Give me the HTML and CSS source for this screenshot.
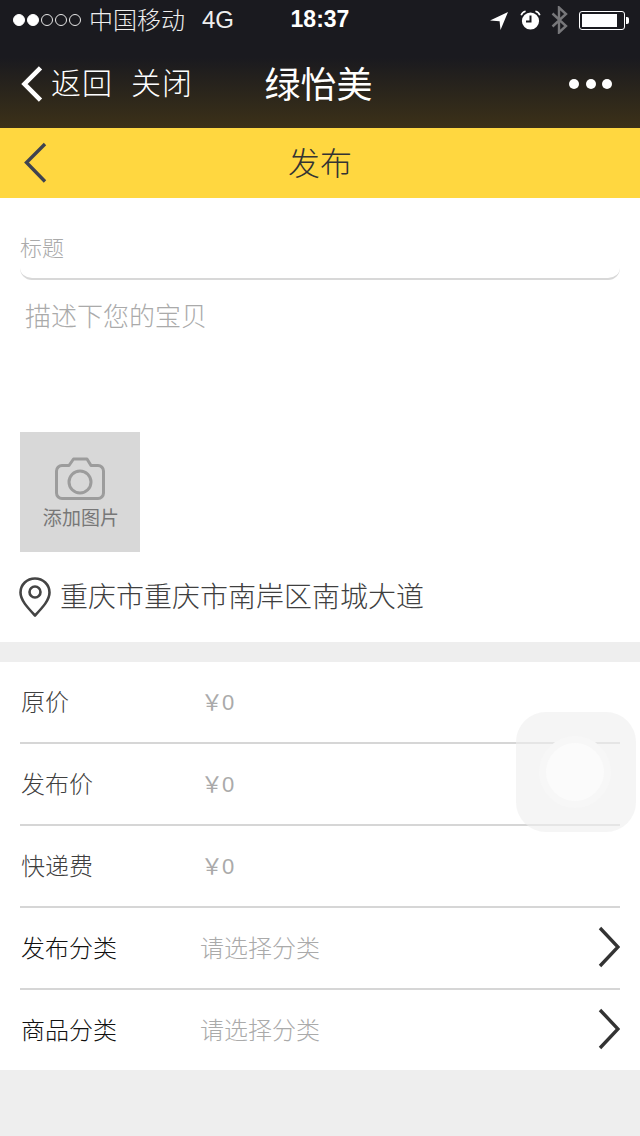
FILE: index.html
```html
<!DOCTYPE html>
<html lang="zh-CN">
<head>
<meta charset="utf-8">
<title>发布</title>
<link rel="stylesheet" href="styles.css">
</head>
<body>
<div class="app">
  <header class="wx">
    <div class="status">
      <div class="status-left">
        <span class="dots"><i class="dot on"></i><i class="dot on"></i><i class="dot"></i><i class="dot"></i><i class="dot"></i></span>
        <span class="carrier">中国移动</span>
        <span class="net">4G</span>
      </div>
      <div class="time">18:37</div>
      <div class="status-right">
        <svg class="ic-loc" width="18" height="20" viewBox="0 0 18 20"><path d="M0 10.5 18 2 10.5 20 9.6 11.2Z" fill="#fff"/></svg>
        <svg class="ic-alarm" width="21" height="20" viewBox="0 0 21 20"><circle cx="10.5" cy="11" r="8.6" fill="#fff"/><path d="M10.5 5.5V11.6H6" fill="none" stroke="#1a1a1f" stroke-width="2"/><path d="M1.2 5.2C2 2.8 3.6 1.6 5.6 1.2M19.8 5.2C19 2.8 17.4 1.6 15.4 1.2" fill="none" stroke="#fff" stroke-width="1.6"/></svg>
        <svg class="ic-bt" width="17" height="28" viewBox="0 0 17 28"><path d="M1.5 7.5 15 20 8 26.5V1.5L15 8 1.5 20.5" fill="none" stroke="#77777a" stroke-width="2.4"/></svg>
        <span class="battery"><span class="battery-fill"></span></span><span class="battery-tip"></span>
      </div>
    </div>
    <div class="wx-nav">
      <div class="wx-left">
        <svg class="wx-back" width="22" height="36" viewBox="0 0 22 36"><path d="M19.500 1.800 3.500 18 19.500 34.200" fill="none" stroke="#fff" stroke-width="4.600"/></svg>
        <span class="wx-link">返回</span>
        <span class="wx-link wx-close">关闭</span>
      </div>
      <div class="wx-title">绿怡美</div>
      <div class="wx-more"><i></i><i></i><i></i></div>
    </div>
  </header>

  <div class="bar">
    <svg class="bar-back" width="24" height="42" viewBox="0 0 24 42"><path d="M21 2 2.500 20.500 21 39.500" fill="none" stroke="#3f4350" stroke-width="3.400"/></svg>
    <h1 class="bar-title">发布</h1>
  </div>

  <section class="compose">
    <div class="field-title">标题</div>
    <div class="field-desc">描述下您的宝贝</div>
    <div class="add-photo">
      <svg class="camera" width="52" height="44" viewBox="0 0 52 44"><path d="M8 8.500H15L19.500 2H33L37 8.500H44C47 8.500 49.500 11 49.500 14V36C49.500 39 47 41.500 44 41.500H8C5 41.500 2.500 39 2.500 36V14C2.500 11 5 8.500 8 8.500Z" fill="none" stroke="#9c9c9c" stroke-width="3" stroke-linejoin="round"/><circle cx="26" cy="25" r="11" fill="none" stroke="#9c9c9c" stroke-width="3"/></svg>
      <span class="add-label">添加图片</span>
    </div>
    <div class="location">
      <svg class="pin" width="32" height="40" viewBox="0 0 32 40"><path d="M16 38.500C8 30 1.500 23 1.500 15.500C1.500 7.500 8 1.500 16 1.500S30.500 7.500 30.500 15.500C30.500 23 24 30 16 38.500Z" fill="none" stroke="#444" stroke-width="2.600" stroke-linejoin="round"/><circle cx="16" cy="15" r="5.500" fill="none" stroke="#444" stroke-width="2.600"/></svg>
      <span class="location-text">重庆市重庆市南岸区南城大道</span>
    </div>
  </section>

  <section class="form">
    <div class="row"><span class="label">原价</span><span class="price">￥0</span></div>
    <div class="row"><span class="label">发布价</span><span class="price">￥0</span></div>
    <div class="row"><span class="label">快递费</span><span class="price">￥0</span></div>
    <div class="row row-select">
      <span class="label strong">发布分类</span><span class="choose">请选择分类</span>
      <svg class="chev" width="22" height="42" viewBox="0 0 22 42"><path d="M2 2 20 21 2 40" fill="none" stroke="#333" stroke-width="3.400"/></svg>
    </div>
    <div class="row row-select row-last">
      <span class="label strong">商品分类</span><span class="choose">请选择分类</span>
      <svg class="chev" width="22" height="42" viewBox="0 0 22 42"><path d="M2 2 20 21 2 40" fill="none" stroke="#333" stroke-width="3.400"/></svg>
    </div>
  </section>

  <div class="assist"><div class="assist-ring"><div class="assist-core"></div></div></div>
</div>
</body>
</html>
```

FILE: styles.css
```css
* { box-sizing: border-box; }
html, body { margin: 0; padding: 0; }
body {
  background: #eeeeee;
  font-family: "Noto Sans CJK SC", "Liberation Sans", sans-serif;
  font-weight: 300;
}
.app { position: relative; width: 640px; height: 1136px; overflow: hidden; background: #eee; }

.wx {
  height: 128px;
  color: #fff;
  background: linear-gradient(to bottom, #1a1a1f 0, #1a1a1f 58px, #3c3118 128px);
}
.status {
  height: 40px;
  display: grid;
  grid-template-columns: 1fr auto 1fr;
  align-items: center;
  padding: 0 11px 0 13px;
}
.status-left { display: flex; align-items: center; }
.dots { display: flex; gap: 2px; margin-right: 8px; }
.dot { width: 12px; height: 12px; border-radius: 50%; border: 1.5px solid #e8e8e8; }
.dot.on { background: #fff; border-color: #fff; }
.carrier { font-size: 24px; line-height: 38px; color: #eee; padding-bottom: 2px; }
.net { font-family: "Liberation Sans", sans-serif; font-weight: 400; font-size: 24px; margin-left: 17px; color: #eee; }
.time { font-family: "Liberation Sans", sans-serif; font-weight: 700; font-size: 23px; padding-right: 2px; padding-bottom: 1px; }
.status-right { display: flex; align-items: center; justify-content: flex-end; }
.ic-loc { margin-right: 12px; }
.ic-alarm { margin-right: 10px; }
.ic-bt { margin-right: 11px; }
.battery { width: 46px; height: 19px; border: 1.5px solid #fff; border-radius: 3px; padding: 2px; display: block; }
.battery-fill { display: block; width: 35px; height: 100%; background: #fff; }
.battery-tip { width: 3px; height: 7px; margin-left: 1px; background: #fff; border-radius: 0 2px 2px 0; }

.wx-nav { position: relative; height: 88px; display: flex; align-items: center; justify-content: space-between; padding: 0 28px 0 21px; }
.wx-left { display: flex; align-items: center; margin-top: -1px; }
.wx-back { margin-right: 8px; }
.wx-link { font-size: 30px; line-height: 40px; padding-bottom: 6px; letter-spacing: 1px; }
.wx-close { margin-left: 18px; }
.wx-title { position: absolute; left: 0; right: 0; top: 18px; text-align: center; font-size: 36px; line-height: 48px; font-weight: 400; padding-right: 3px; }
.wx-more { display: flex; gap: 6.5px; margin-top: -1px; }
.wx-more i { width: 10px; height: 10px; border-radius: 50%; background: #fff; }

.bar { position: relative; height: 70px; background: #ffd740; display: flex; align-items: center; justify-content: center; }
.bar-back { position: absolute; left: 24px; top: 14px; }
.bar-title { margin: 0; font-size: 32px; line-height: 66px; padding-bottom: 4px; font-weight: 300; color: #333; }

.compose { height: 444px; background: #fff; padding: 0 20px; }
.field-title {
  height: 82px;
  padding-top: 30px;
  font-size: 22px;
  line-height: 36px;
  color: #aaa;
  border-bottom: 2px solid #d8d8d8;
  border-radius: 0 0 12px 12px;
}
.field-desc { height: 152px; padding: 16px 0 0 5px; font-size: 26px; line-height: 38px; color: #aaa; }
.add-photo {
  width: 120px; height: 120px;
  background: #d8d8d8;
  display: flex; flex-direction: column; align-items: center;
  padding-top: 25px;
}
.add-label { font-size: 19px; line-height: 26px; color: #777; font-weight: 400; margin: 3px 0 0 2px; letter-spacing: 0.1px; }
.location { display: flex; align-items: center; margin-top: 24px; height: 44px; }
.pin { margin: -2px 9px 0 -1px; }
.location-text { font-size: 28px; line-height: 40px; color: #3f3f3f; padding-bottom: 6px; }

.form { margin-top: 20px; height: 408px; background: #fff; padding: 0 20px; }
.row { position: relative; height: 82px; display: flex; align-items: center; border-bottom: 2px solid #d6d6d6; }
.row-last { border-bottom: 0; height: 80px; }
.label { width: 180px; font-size: 24px; line-height: 36px; color: #3f3f3f; padding-left: 1px; margin-top: -3px; }
.label.strong { color: #111; }
.price { font-family: "Liberation Sans", sans-serif; font-size: 22px; color: #aaa; padding: 0 0 4px 1px; letter-spacing: -1px; }
.choose { font-size: 24px; line-height: 36px; color: #aaa; margin-top: -3px; }
.chev { position: absolute; right: 0; top: 18px; }

.assist { position: absolute; left: 516px; top: 712px; width: 120px; height: 120px; border-radius: 30px; background: rgba(238, 238, 238, 0.6); display: flex; align-items: center; justify-content: center; padding-right: 2px; }
.assist-ring { width: 72px; height: 72px; border-radius: 50%; background: #f7f7f7; display: flex; align-items: center; justify-content: center; }
.assist-core { width: 58px; height: 58px; border-radius: 50%; background: #fbfbfb; }
```
